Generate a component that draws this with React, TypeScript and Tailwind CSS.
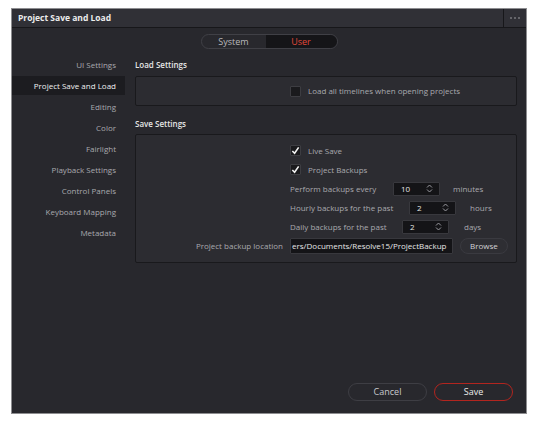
import React from 'react';

const font = { fontFamily: '"Open Sans", "Noto Sans", sans-serif' };

const navItems = [
  'UI Settings',
  'Project Save and Load',
  'Editing',
  'Color',
  'Fairlight',
  'Playback Settings',
  'Control Panels',
  'Keyboard Mapping',
  'Metadata',
];

const Check = ({ checked }: { checked?: boolean }) => (
  <span className="w-[11px] h-[11px] rounded-[1px] bg-[#1a1a1d] border border-[#3d3d42] flex items-center justify-center">
    {checked && (
      <svg width="9" height="9" viewBox="0 0 10 10">
        <path d="M1.5 5.5 L4 8 L8.5 1.5" fill="none" stroke="#f2f2f2" strokeWidth="1.8" />
      </svg>
    )}
  </span>
);

const Spinner = ({ value }: { value: string }) => (
  <div className="w-[47px] h-[14px] bg-[#141417] border border-[#38383d] rounded-[1px] flex items-center justify-between pl-[7px] pr-[6px]">
    <span className="text-[#e6e6e6]">{value}</span>
    <svg width="7" height="9" viewBox="0 0 7 9">
      <path d="M1 3.5 L3.5 1 L6 3.5 M1 5.5 L3.5 8 L6 5.5" fill="none" stroke="#9a9aa0" strokeWidth="1" />
    </svg>
  </div>
);

const App = () => {
  return (
    <div className="w-[533px] h-[422px] bg-white pt-[8px] pl-[11px]" style={font}>
      <div className="w-[516px] h-[406px] bg-[#28282d] border border-[#8d8d90] flex flex-col text-[8px] text-[#a9a9ae]">
        {/* Title bar */}
        <div className="h-[19px] bg-[#303036] border-b border-[#17171a] flex items-stretch">
          <div className="flex-1 flex items-center pl-[6px] text-[8.5px] font-bold text-[#ececec]">
            Project Save and Load
          </div>
          <div className="w-[23px] border-l border-[#17171a] flex items-center justify-center gap-[2px]">
            <span className="w-[2px] h-[2px] rounded-full bg-[#77777c]" />
            <span className="w-[2px] h-[2px] rounded-full bg-[#77777c]" />
            <span className="w-[2px] h-[2px] rounded-full bg-[#77777c]" />
          </div>
        </div>

        {/* System / User toggle */}
        <div className="flex justify-center mt-[6px]">
          <div className="flex h-[15px] w-[137px] rounded-full border border-[#404046] overflow-hidden text-[9px]">
            <div className="w-[64px] flex items-center justify-center text-[#b8b8bc]">System</div>
            <div className="flex-1 bg-[#151518] flex items-center justify-center text-[#e2493b]">User</div>
          </div>
        </div>

        <div className="flex flex-1 mt-[5px]">
          {/* Sidebar */}
          <div className="w-[113px] flex flex-col">
            {navItems.map((item, i) => (
              <div
                key={item}
                className={
                  i === 1
                    ? 'h-[19px] my-[1px] flex items-center justify-end pr-[9px] bg-[#1c1c20] text-[#f0f0f0]'
                    : 'h-[21px] flex items-center justify-end pr-[9px]'
                }
              >
                {item}
              </div>
            ))}
          </div>

          {/* Content */}
          <div className="flex-1 ml-[10px] mr-[9px] flex flex-col">
            <div className="h-[22px] flex items-center text-[#e6e6e6] font-semibold">Load Settings</div>
            <div className="h-[30px] bg-[#2c2c31] border border-[#19191c] rounded-[2px] grid grid-cols-[147px_1fr] gap-x-[7px] items-center">
              <div />
              <div className="flex items-center gap-[7px]">
                <Check />
                <span>Load all timelines when opening projects</span>
              </div>
            </div>

            <div className="h-[28px] pt-[7px] flex items-center text-[#e6e6e6] font-semibold">Save Settings</div>
            <div className="h-[129px] bg-[#2c2c31] border border-[#19191c] rounded-[2px] pt-[6px] grid grid-cols-[147px_1fr] gap-x-[7px] auto-rows-[19px] items-center">
              <div />
              <div className="flex items-center gap-[7px]">
                <Check checked />
                <span>Live Save</span>
              </div>
              <div />
              <div className="flex items-center gap-[7px]">
                <Check checked />
                <span>Project Backups</span>
              </div>
              <div />
              <div className="flex items-center">
                <span className="w-[103px]">Perform backups every</span>
                <Spinner value="10" />
                <span className="ml-[13px]">minutes</span>
              </div>
              <div />
              <div className="flex items-center">
                <span className="w-[119px]">Hourly backups for the past</span>
                <Spinner value="2" />
                <span className="ml-[14px]">hours</span>
              </div>
              <div />
              <div className="flex items-center">
                <span className="w-[112px]">Daily backups for the past</span>
                <Spinner value="2" />
                <span className="ml-[15px]">days</span>
              </div>
              <div className="text-right">Project backup location</div>
              <div className="flex items-center">
                <div className="w-[163px] h-[16px] bg-[#141417] border border-[#38383d] rounded-[1px] flex items-center overflow-hidden whitespace-nowrap text-[#e6e6e6] pl-[1px]">
                  ers/Documents/Resolve15/ProjectBackup
                </div>
                <div className="ml-[7px] w-[48px] h-[16px] rounded-full border border-[#3a3a40] bg-[#2e2e33] flex items-center justify-center text-[#d2d2d6]">
                  Browse
                </div>
              </div>
            </div>
          </div>
        </div>

        {/* Footer */}
        <div className="flex justify-end gap-[7px] pr-[13px] pb-[12px]">
          <div className="w-[79px] h-[18px] rounded-full border border-[#3e3e44] flex items-center justify-center text-[#c9c9cd] text-[9px]">
            Cancel
          </div>
          <div className="w-[79px] h-[18px] rounded-full border border-[#b2251f] flex items-center justify-center text-[#ececec] text-[9px]">
            Save
          </div>
        </div>
      </div>
    </div>
  );
};

export default App;
